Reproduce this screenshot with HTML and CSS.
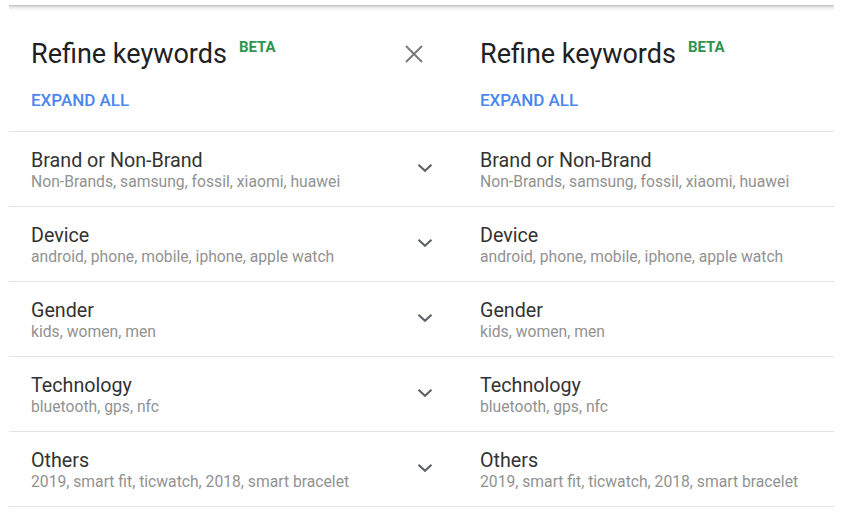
FILE: index.html
```html
<!DOCTYPE html>
<html>
<head>
<meta charset="utf-8">
<link rel="stylesheet" href="styles.css">
</head>
<body>
<div class="wrap">
  <section class="panel panel-left">
    <div class="inner">
      <div class="shade"></div>
      <header class="head">
        <div class="title-row">
          <h1 class="title">Refine keywords<span class="beta">BETA</span></h1>
          <span class="close">
            <svg width="18" height="18" viewBox="0 0 18 18"><path d="M1 1L17 17M17 1L1 17" stroke="#7a7a7a" stroke-width="2" fill="none"/></svg>
          </span>
        </div>
        <div class="expand">EXPAND ALL</div>
      </header>
      <div class="row"><div class="txt"><div class="name">Brand or Non-Brand</div><div class="sub">Non-Brands, samsung, fossil, xiaomi, huawei</div></div><span class="chev"><svg width="16" height="10" viewBox="0 0 16 10"><path d="M1.5 1.8L8 7.8L14.5 1.8" stroke="#5f6368" stroke-width="2.2" fill="none"/></svg></span></div>
      <div class="row"><div class="txt"><div class="name">Device</div><div class="sub">android, phone, mobile, iphone, apple watch</div></div><span class="chev"><svg width="16" height="10" viewBox="0 0 16 10"><path d="M1.5 1.8L8 7.8L14.5 1.8" stroke="#5f6368" stroke-width="2.2" fill="none"/></svg></span></div>
      <div class="row"><div class="txt"><div class="name">Gender</div><div class="sub">kids, women, men</div></div><span class="chev"><svg width="16" height="10" viewBox="0 0 16 10"><path d="M1.5 1.8L8 7.8L14.5 1.8" stroke="#5f6368" stroke-width="2.2" fill="none"/></svg></span></div>
      <div class="row"><div class="txt"><div class="name">Technology</div><div class="sub">bluetooth, gps, nfc</div></div><span class="chev"><svg width="16" height="10" viewBox="0 0 16 10"><path d="M1.5 1.8L8 7.8L14.5 1.8" stroke="#5f6368" stroke-width="2.2" fill="none"/></svg></span></div>
      <div class="row"><div class="txt"><div class="name">Others</div><div class="sub">2019, smart fit, ticwatch, 2018, smart bracelet</div></div><span class="chev"><svg width="16" height="10" viewBox="0 0 16 10"><path d="M1.5 1.8L8 7.8L14.5 1.8" stroke="#5f6368" stroke-width="2.2" fill="none"/></svg></span></div>
    </div>
  </section>
  <section class="panel panel-right">
    <div class="inner">
      <div class="shade"></div>
      <header class="head">
        <div class="title-row">
          <h1 class="title">Refine keywords<span class="beta">BETA</span></h1>
        </div>
        <div class="expand">EXPAND ALL</div>
      </header>
      <div class="row"><div class="txt"><div class="name">Brand or Non-Brand</div><div class="sub">Non-Brands, samsung, fossil, xiaomi, huawei</div></div></div>
      <div class="row"><div class="txt"><div class="name">Device</div><div class="sub">android, phone, mobile, iphone, apple watch</div></div></div>
      <div class="row"><div class="txt"><div class="name">Gender</div><div class="sub">kids, women, men</div></div></div>
      <div class="row"><div class="txt"><div class="name">Technology</div><div class="sub">bluetooth, gps, nfc</div></div></div>
      <div class="row"><div class="txt"><div class="name">Others</div><div class="sub">2019, smart fit, ticwatch, 2018, smart bracelet</div></div></div>
    </div>
  </section>
</div>
</body>
</html>
```
FILE: styles.css
```css
html, body {
  margin: 0;
  padding: 0;
  background: #fff;
}
body {
  font-family: Roboto, "Liberation Sans", Arial, sans-serif;
}
.wrap {
  display: flex;
  margin: 5px 0 0 9px;
}
.panel {
  overflow: hidden;
}
.panel-left {
  width: 449px;
}
.panel-right {
  width: 376px;
}
.inner {
  width: 449px;
}
.shade {
  height: 6px;
  background: linear-gradient(#bdbdbd, #e6e6e6 35%, #f6f6f6 70%, #fff);
}
.head {
  padding: 27px 0 21px 22px;
  border-bottom: 1px solid #e3e3e3;
}
.title-row {
  display: flex;
  align-items: center;
  justify-content: space-between;
  padding-right: 35px;
}
.title {
  margin: 0;
  font-size: 27px;
  line-height: 32px;
  font-weight: 400;
  color: #202124;
}
.beta {
  display: inline-block;
  vertical-align: top;
  margin-left: 12px;
  margin-top: -1px;
  font-size: 15px;
  line-height: 20px;
  font-weight: 700;
  color: #2e9550;
}
.close {
  display: flex;
  width: 18px;
  height: 18px;
}
.expand {
  margin-top: 20px;
  font-size: 17px;
  line-height: 20px;
  font-weight: 500;
  color: #4a86f0;
}
.row {
  display: flex;
  align-items: center;
  justify-content: space-between;
  padding: 17px 25px 14px 22px;
  border-bottom: 1px solid #e3e3e3;
}
.name {
  font-size: 19.7px;
  line-height: 23px;
  color: #333333;
}
.sub {
  font-size: 15.7px;
  line-height: 20px;
  color: #929292;
}
.chev {
  display: flex;
  width: 16px;
  height: 10px;
  margin-bottom: 6px;
}
```
